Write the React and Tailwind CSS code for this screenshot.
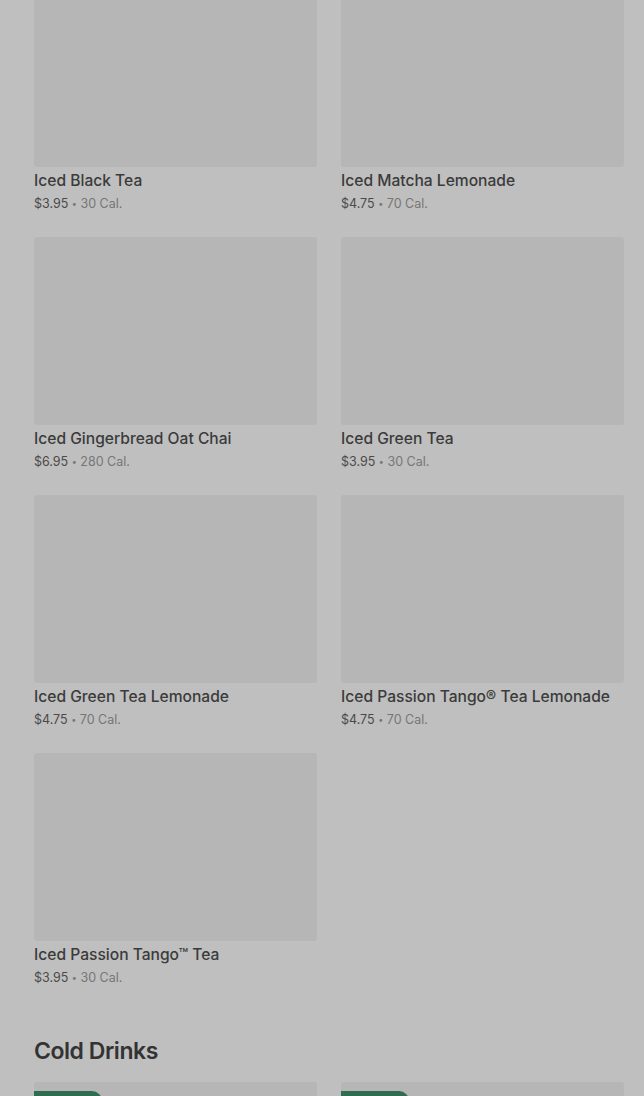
import React from "react";

const teas = [
  { name: "Iced Black Tea", price: "$3.95", cal: "30 Cal." },
  { name: "Iced Matcha Lemonade", price: "$4.75", cal: "70 Cal." },
  { name: "Iced Gingerbread Oat Chai", price: "$6.95", cal: "280 Cal." },
  { name: "Iced Green Tea", price: "$3.95", cal: "30 Cal." },
  { name: "Iced Green Tea Lemonade", price: "$4.75", cal: "70 Cal." },
  { name: "Iced Passion Tango® Tea Lemonade", price: "$4.75", cal: "70 Cal." },
  { name: "Iced Passion Tango™ Tea", price: "$3.95", cal: "30 Cal." },
];

function ProductCard({ item }) {
  return (
    <div className="flex flex-col">
      <div className="h-[188px] rounded-[3px] bg-[#b6b6b6]" />
      <div className="mt-[2px] text-[15.6px] leading-[24px] font-medium text-[#3b3b3b]">
        {item.name}
      </div>
      <div className="mt-[2px] text-[12.5px] leading-[18px]">
        <span className="text-[#4a4a4a]">{item.price}</span>
        <span className="text-[#767676]"> <span className="text-[9px] align-[1px]">•</span> {item.cal}</span>
      </div>
    </div>
  );
}

export default function App() {
  return (
    <div
      className="min-h-[1096px] h-[1096px] overflow-hidden bg-[#bfbfbf] pl-[34px] pr-[20px]"
      style={{ fontFamily: "Inter, 'Noto Sans', sans-serif" }}
    >
      <div className="-mt-[21px] grid grid-cols-2 gap-x-[24px] gap-y-[24px]">
        {teas.map((t) => (
          <ProductCard key={t.name} item={t} />
        ))}
      </div>

      <h2 className="mt-[49px] text-[23px] leading-[30px] font-semibold tracking-[-0.02em] text-[#333333]">
        Cold Drinks
      </h2>

      <div className="mt-[16px] grid grid-cols-2 gap-x-[24px]">
        {[0, 1].map((i) => (
          <div key={i} className="relative h-[188px] rounded-[3px] bg-[#b6b6b6]">
            <div className="absolute left-0 top-[9px] h-[20px] w-[68px] rounded-r-full bg-[#2f6d50]" />
          </div>
        ))}
      </div>
    </div>
  );
}
